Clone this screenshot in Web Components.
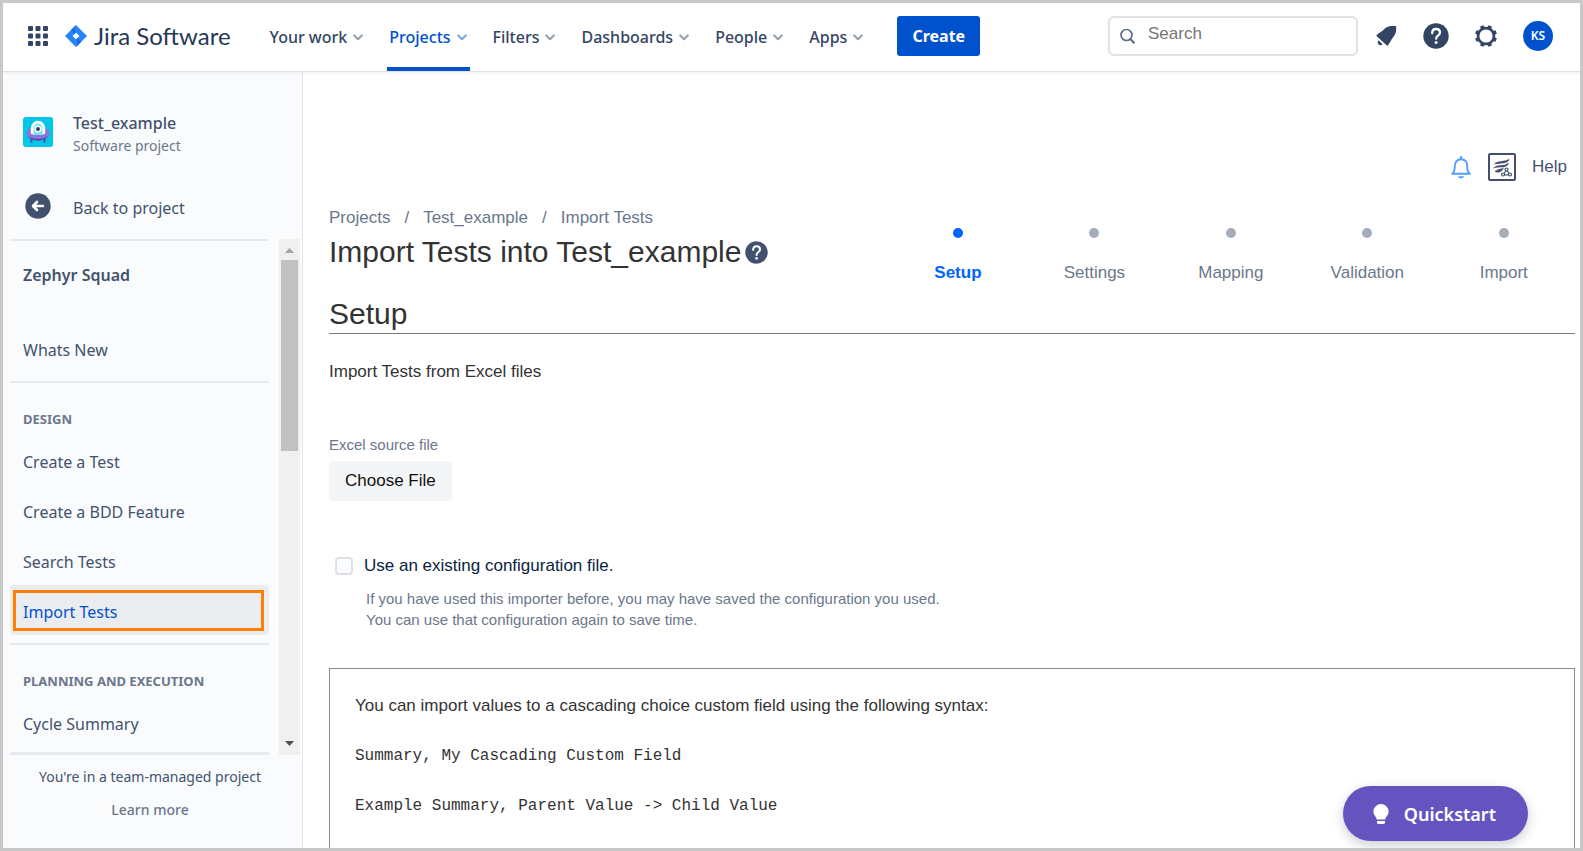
<!DOCTYPE html>
<html lang="en">
<head>
<meta charset="utf-8">
<title>Import Tests - Jira Software</title>
<style>
html, body { margin: 0; height: 100%; }
body { font-family: "Liberation Sans", Arial, sans-serif; font-size: 17px; color: #333; background: #fff;
  --ui: "Noto Sans", "Open Sans", sans-serif; --ink: #42526e; --navy: #344563; --muted: #6b778c; --blue: #0052cc; --line: #e8e9ec; }
</style>
</head>
<body>
<app-shell>
  <top-bar slot="header">
    <nav-item>Your work</nav-item>
    <nav-item current>Projects</nav-item>
    <nav-item>Filters</nav-item>
    <nav-item>Dashboards</nav-item>
    <nav-item>People</nav-item>
    <nav-item>Apps</nav-item>
  </top-bar>
  <side-bar slot="side">
    <side-link>Whats New</side-link>
    <side-section heading="Design">
      <side-link>Create a Test</side-link>
      <side-link>Create a BDD Feature</side-link>
      <side-link>Search Tests</side-link>
      <side-link current>Import Tests</side-link>
    </side-section>
    <side-section heading="Planning and execution">
      <side-link>Cycle Summary</side-link>
    </side-section>
  </side-bar>
  <import-page>
    <step-item slot="steps" current>Setup</step-item>
    <step-item slot="steps">Settings</step-item>
    <step-item slot="steps">Mapping</step-item>
    <step-item slot="steps">Validation</step-item>
    <step-item slot="steps">Import</step-item>
  </import-page>
  <quick-start slot="float">Quickstart</quick-start>
</app-shell>

<script>
function define(name, html) {
  const template = document.createElement('template');
  template.innerHTML = '<style>*{box-sizing:border-box}a{color:inherit;text-decoration:none}button{font:inherit;border:0;padding:0;background:none;color:inherit;cursor:pointer}svg{display:block}</style>' + html;
  customElements.define(name, class extends HTMLElement {
    constructor() {
      super();
      this.attachShadow({ mode: 'open' }).append(template.content.cloneNode(true));
    }
    connectedCallback() {
      const heading = this.shadowRoot.querySelector('[data-heading]');
      if (heading) heading.textContent = this.getAttribute('heading').toUpperCase();
    }
  });
}

define('app-shell', `
<style>
:host { display: flex; flex-direction: column; box-sizing: border-box; height: 100vh; border: 3px solid #c8c8c8; overflow: hidden; position: relative; }
.body { flex: 1; min-height: 0; display: grid; grid-template-columns: 300px minmax(0, 1fr); }
.body > div { min-height: 0; overflow: hidden; display: grid; }
</style>
<slot name="header"></slot>
<div class="body"><div><slot name="side"></slot></div><div><slot></slot></div></div>
<slot name="float"></slot>`);

define('help-icon', `
<style>:host { display: block; width: 26px; height: 26px; color: var(--navy); } svg { width: 100%; height: 100%; }</style>
<svg viewBox="0 0 26 26" aria-hidden="true"><circle cx="13" cy="13" r="12.7" fill="currentColor"/><path d="M9.2 10.2C9.2 7.6 10.8 6 13.1 6s3.9 1.500 3.900 3.600c0 3-3.900 2.800-3.900 6.100" fill="none" stroke="#fff" stroke-width="2.300" stroke-linecap="round"/><circle cx="13.100" cy="19.600" r="1.500" fill="#fff"/></svg>`);

define('nav-item', `
<style>
:host { display: block; }
a { display: flex; align-items: center; gap: 6px; height: 100%; padding: 4px 3px 4px 2px; border-bottom: 0 solid var(--blue); color: var(--navy); font: 500 16px/20px var(--ui); white-space: nowrap; }
:host([current]) a { color: var(--blue); border-bottom-width: 4px; padding-bottom: 0; }
svg { opacity: .5; }
</style>
<a href="#"><slot></slot><svg width="10" height="7" viewBox="0 0 10 7" aria-hidden="true"><path d="M1.200 1.500 5 5.200 8.800 1.500" fill="none" stroke="currentColor" stroke-width="2.200" stroke-linecap="round" stroke-linejoin="round"/></svg></a>`);

define('top-bar', `
<style>
:host { display: flex; align-items: center; height: 69px; flex: none; box-sizing: border-box; padding: 0 27px 2px 25px; border-bottom: 1px solid #dfe1e5; box-shadow: 0 1px 3px rgba(9,30,66,.08); position: relative; z-index: 1; background: #fff; color: var(--navy); }
.brand { display: flex; align-items: center; gap: 7px; margin-left: 17px; font: 24px/30px Lato, sans-serif; color: #253858; white-space: nowrap; }
nav { display: flex; align-self: stretch; gap: 21px; margin: 0 0 -2px 37px; }
.create { height: 40px; padding: 0 15px; margin-left: 31px; border-radius: 3px; background: var(--blue); color: #fff; font: 700 16px/20px var(--ui); }
.search { display: flex; align-items: center; gap: 13px; width: 250px; height: 40px; margin-left: auto; padding: 0 10px; border: 2px solid #dfe1e6; border-radius: 6px; color: #5e6c84; }
input { flex: 1; min-width: 0; border: 0; outline: 0; padding: 0 0 4px; background: none; font: 17px/24px "Liberation Sans", sans-serif; }
input::placeholder { color: #757575; }
.icons { display: flex; align-items: center; gap: 24px; margin-left: 15px; }
.avatar { width: 30px; height: 30px; border-radius: 50%; background: var(--blue); color: #fff; font: 600 12px/30px var(--ui); }
</style>
<button aria-label="Switch product"><svg width="20" height="20" fill="currentColor"><rect width="5" height="5" rx="1"/><rect x="7.500" width="5" height="5" rx="1"/><rect x="15" width="5" height="5" rx="1"/><rect y="7.500" width="5" height="5" rx="1"/><rect x="7.500" y="7.500" width="5" height="5" rx="1"/><rect x="15" y="7.500" width="5" height="5" rx="1"/><rect y="15" width="5" height="5" rx="1"/><rect x="7.500" y="15" width="5" height="5" rx="1"/><rect x="15" y="15" width="5" height="5" rx="1"/></svg></button>
<a class="brand" href="#"><svg width="22" height="22" viewBox="0 0 22 22" aria-hidden="true"><defs><linearGradient id="g" x1="11" y1="3" x2="6" y2="8" gradientUnits="userSpaceOnUse"><stop stop-color="#0052cc"/><stop offset="1" stop-color="#2684ff"/></linearGradient><linearGradient id="h" x1="11" y1="19" x2="16" y2="14" gradientUnits="userSpaceOnUse"><stop stop-color="#0052cc"/><stop offset="1" stop-color="#2684ff"/></linearGradient></defs><path d="M11 0 22 11 11 22 0 11ZM11 7.600 7.600 11 11 14.400 14.400 11Z" fill="#2684ff" fill-rule="evenodd"/><path d="M11 7.600C8.600 5.500 8.600 2.500 11 0L5.500 5.500 9.300 9.300Z" fill="url(#g)"/><path d="M11 14.400c2.400 2.100 2.400 5.100 0 7.600l5.500-5.500-3.800-3.800Z" fill="url(#h)"/></svg><span>Jira Software</span></a>
<nav aria-label="Main"><slot></slot></nav>
<button class="create">Create</button>
<label class="search"><svg width="15" height="16" viewBox="0 0 15 16" aria-hidden="true"><circle cx="6.500" cy="7" r="5.500" fill="none" stroke="currentColor" stroke-width="1.700"/><path d="m10.600 11.200 3.300 3.500" stroke="currentColor" stroke-width="2" stroke-linecap="round"/></svg><input type="search" placeholder="Search" aria-label="Search"></label>
<div class="icons">
<button aria-label="Notifications"><svg width="26" height="26" viewBox="0 0 26 26" fill="currentColor"><path d="M3.200 12.700C6 9.600 9.500 8.200 12.200 5.300 14.800 2.800 19 2.600 23 3.100c.6 3.300.3 7.600-2.300 10.500-2.600 2.900-3.500 6.500-6.300 9.300Z"/><path d="M5.500 17.200 9.600 21.300A3 3 0 0 1 5.400 21.200 3 3 0 0 1 5.500 17.200Z"/></svg></button>
<button aria-label="Help"><help-icon></help-icon></button>
<button aria-label="Settings"><svg width="26" height="26" viewBox="0 0 26 26"><g fill="currentColor"><path id="t" d="M10.800 5 11.200 2h3.600l.4 3v16l-.4 3h-3.600l-.4-3Z" transform="rotate(22.500 13 13)"/><use href="#t" transform="rotate(45 13 13)"/><use href="#t" transform="rotate(90 13 13)"/><use href="#t" transform="rotate(135 13 13)"/><circle cx="13" cy="13" r="9.300"/></g><circle cx="13" cy="13" r="6.600" fill="#fff"/></svg></button>
<button class="avatar" aria-label="Profile">KS</button>
</div>`);

define('side-link', `
<style>
:host { display: block; color: var(--ink); font: 16px/22px var(--ui); }
a { display: block; height: 50px; padding: 16px 13px 12px; border-radius: 4px; }
:host([current]) a { background: #ebecf0; color: var(--blue); position: relative; }
:host([current]) a::after { content: ""; position: absolute; inset: 5px 5px 4px 3px; border: 3px solid #ff8000; }
</style><a href="#"><slot></slot></a>`);

define('side-section', `
<style>
:host { display: block; margin-top: 8px; border-top: 2px solid var(--line); }
h3 { margin: 0; padding: 26px 13px 6px; font: 700 13px/20px var(--ui); color: var(--muted); white-space: nowrap; }
</style><h3 data-heading></h3><slot></slot>`);

define('side-bar', `
<style>
:host { display: flex; flex-direction: column; min-height: 0; padding: 40px 2px 0 7px; box-sizing: border-box; background: #fafbfc; border-right: 1px solid #e4e6ea; font: 16px/22px var(--ui); color: var(--ink); }
.row { display: grid; grid-template-columns: 30px 1fr; gap: 20px; padding: 0 13px; }
.row svg { justify-self: center; }
.project svg { margin-top: 5px; }
b { display: block; font-weight: 500; }
small { display: block; font-size: 14px; line-height: 24px; color: var(--muted); }
.back { margin: 23px 32px 8px 0; height: 50px; align-items: center; }
.back span { padding-top: 4px; }
.scroll { flex: 1; min-height: 0; display: grid; grid-template-columns: 1fr 21px; grid-template-rows: minmax(0, 1fr); gap: 10px; }
.list { display: flex; flex-direction: column; min-height: 0; border-bottom: 3px solid var(--line); border-top: 2px solid var(--line); }
.inner { flex: 1; min-height: 0; overflow: hidden; }
h2 { margin: 0; padding: 24px 13px 38px; font: 600 16px/20px var(--ui); }
.track { display: flex; flex-direction: column; align-items: center; background: #f0f0f0; }
.track svg { flex: none; }
.thumb { width: 17px; height: 37%; background: #c1c1c1; }
.down { margin-top: auto; }
footer { flex: none; padding: 12px 10px 28px 0; display: grid; gap: 13px; text-align: center; font-size: 14px; line-height: 20px; }
footer a { color: var(--muted); font-weight: 500; }
</style>
<div class="row project"><svg width="30" height="30" viewBox="0 0 30 30" aria-hidden="true"><rect width="30" height="30" rx="3" fill="#00c7e6"/><path d="M8.500 21v4.500M21.500 21v4.500" stroke="#5243aa" stroke-width="1.800"/><ellipse cx="15" cy="16.500" rx="11.600" ry="7" fill="#8777d9"/><path d="M5 19.500c4 5.500 16 5.500 20 0-5 3.200-15 3.200-20 0Z" fill="#5243aa"/><path d="M7.800 16.500V11a7.200 7.200 0 0 1 14.400 0v5.500c-3 2-11.400 2-14.400 0Z" fill="#fff"/><path d="M10.500 18V12a4.500 5.500 0 0 1 9 0v6Z" fill="#79e2f2"/><circle cx="15" cy="12" r="3.600" fill="#fff"/><circle cx="15" cy="12" r="1.900" fill="#253858"/></svg><div><b>Test_example</b><small>Software project</small></div></div>
<a class="row back" href="#"><svg width="26" height="26" viewBox="0 0 26 26" aria-hidden="true"><circle cx="13" cy="13" r="12.700" fill="currentColor"/><path d="M18 13H8.500M12 9l-4 4 4 4" fill="none" stroke="#fff" stroke-width="2.600" stroke-linecap="round" stroke-linejoin="round"/></svg><span>Back to project</span></a>
<div class="scroll">
<div class="list"><div class="inner"><h2>Zephyr Squad</h2><slot></slot></div></div>
<div class="track"><svg width="21" height="21"><path d="M6 14h9l-4.500-5Z" fill="#a3a3a3"/></svg><div class="thumb"></div><svg class="down" width="21" height="21"><path d="M6 7h9l-4.500 5Z" fill="#505050"/></svg></div>
</div>
<footer><span>You're in a team-managed project</span><a href="#">Learn more</a></footer>`);

define('step-item', `
<style>
:host { display: grid; justify-items: center; gap: 25px; color: var(--muted); line-height: 20px; }
:host::before { content: ""; width: 10px; height: 10px; border-radius: 50%; background: #a5adba; }
:host([current]) { color: #0065ff; font-weight: 700; }
:host([current])::before { background: #0065ff; }
</style><slot></slot>`);

define('import-page', `
<style>
:host { display: block; padding: 80px 5px 0 26px; line-height: 20px; }
.tools { display: flex; align-items: center; justify-content: flex-end; height: 30px; padding-right: 8px; color: var(--ink); }
.tools button + button { margin: 0 16px 0 17px; }
.head { display: grid; grid-template-columns: minmax(0, 45fr) minmax(0, 55fr); margin-top: 26px; }
.crumbs { display: flex; gap: 14px; color: var(--muted); white-space: nowrap; }
h1, h2 { margin: 0; font-weight: 400; font-size: 30px; line-height: 36px; white-space: nowrap; }
h1 { display: flex; align-items: center; gap: 4px; margin-top: 6px; }
h1 help-icon { width: 23px; height: 23px; color: var(--ink); }
.steps { display: grid; grid-template-columns: repeat(5, 1fr); align-content: start; padding: 20px 3px 0 0; }
h2 { margin-top: 13px; padding-bottom: 1px; border-bottom: 1px solid #7a7a7a; }
p { margin: 0; }
.lead { margin-top: 28px; }
.field { display: grid; justify-items: start; gap: 6px; margin-top: 53px; font-size: 15px; color: var(--muted); }
.field button { height: 40px; padding: 0 16px; border-radius: 4px; background: #f4f5f7; color: #111; font-size: 17px; }
.check { display: grid; grid-template-columns: 18px 1fr; column-gap: 11px; align-items: center; margin: 55px 0 0 6px; color: #091e42; }
input { appearance: none; margin: 0; width: 18px; height: 18px; border: 2px solid #dfe1e6; border-radius: 4px; background: #fafbfc; }
.hint { margin: 12px 0 0 37px; font-size: 15px; line-height: 21px; color: var(--muted); }
.note { margin-top: 38px; padding: 12px 25px; border: 1px solid #8a8a8a; line-height: 50px; }
code { display: block; font: 16px/50px "Liberation Mono", monospace; }
</style>
<div class="tools">
<button aria-label="Alerts"><svg width="20" height="23" viewBox="0 0 20 23"><path d="M1.200 17.800c2.300-1.800 2.600-3.600 2.600-7.300C3.800 6.300 6 3.300 10 3.300s6.200 3 6.200 7.200c0 3.700.3 5.500 2.600 7.300Z" fill="none" stroke="#579dff" stroke-width="1.900" stroke-linejoin="round"/><path d="M10 .8v2.500" stroke="#579dff" stroke-width="2" stroke-linecap="round"/><path d="M7 20.200h6c-.6 2.800-5.400 2.800-6 0Z" fill="#579dff"/></svg></button>
<button aria-label="Zephyr"><svg width="28" height="28" viewBox="0 0 28 28"><rect x="1" y="1" width="26" height="26" rx="1" fill="none" stroke="currentColor" stroke-width="2"/><path d="M6 11.500C9 6.500 17 9.500 21.500 5.500 20.500 12 12 9.500 6 11.500ZM5 15.500C8.500 10.500 16 14 21 9.500 19.500 16.500 11.500 13 5 15.500ZM6.500 18.500c4-3.500 6.500-2 9.500-4-2 5-6 6-9.500 4Z" fill="currentColor"/><path d="m18.500 16.800-3.200 5h6.600Z" fill="#fff" stroke="currentColor" stroke-width="1.200"/><g fill="#fff" stroke="currentColor" stroke-width="1.200"><circle cx="18.500" cy="16.500" r="1.500"/><circle cx="15" cy="21.500" r="1.500"/><circle cx="22" cy="21.500" r="1.500"/></g></svg></button>
<a href="#">Help</a></div>
<div class="head">
<div><nav class="crumbs" aria-label="Breadcrumb"><a href="#">Projects</a><span>/</span><a href="#">Test_example</a><span>/</span><a href="#">Import Tests</a></nav>
<h1><span>Import Tests into Test_example</span><help-icon></help-icon></h1></div>
<div class="steps"><slot name="steps"></slot></div>
</div>
<h2>Setup</h2>
<p class="lead">Import Tests from Excel files</p>
<div class="field"><label for="file">Excel source file</label><button id="file" type="button">Choose File</button></div>
<div class="check"><input type="checkbox" id="existing"><label for="existing">Use an existing configuration file.</label></div>
<p class="hint">If you have used this importer before, you may have saved the configuration you used.<br>You can use that configuration again to save time.</p>
<section class="note"><p>You can import values to a cascading choice custom field using the following syntax:</p>
<code>Summary, My Cascading Custom Field</code><code>Example Summary, Parent Value -&gt; Child Value</code><code>&nbsp;</code></section>`);

define('quick-start', `
<style>
:host { position: absolute; right: 52px; bottom: 7px; z-index: 2; }
button { display: flex; align-items: center; gap: 15px; height: 55px; padding: 0 32px 0 30px; border-radius: 28px; background: #6554c0; color: #fff; font: 600 18px/24px var(--ui); box-shadow: 0 4px 12px rgba(9,30,66,.22); }
</style>
<button><svg width="16" height="20" viewBox="0 0 16 20" fill="#fff" aria-hidden="true"><path d="M8 0a7.600 7.600 0 0 1 7.600 7.600c0 3.600-2.600 4.600-3.400 7.900H3.800C3 12.200.4 11.200.4 7.600A7.600 7.600 0 0 1 8 0ZM4 17h8v1.200c0 1-.6 1.800-1.600 1.800H5.600c-1 0-1.600-.8-1.600-1.800Z"/></svg><slot></slot></button>`);
</script>
</body>
</html>
